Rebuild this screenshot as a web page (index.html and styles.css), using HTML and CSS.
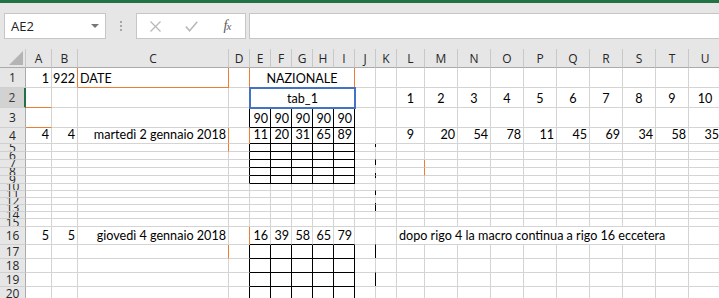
FILE: index.html
```html
<!DOCTYPE html>
<html lang="it">
<head>
<meta charset="utf-8">
<title>Excel - foglio</title>
<link rel="stylesheet" href="styles.css">
</head>
<body>
<div class="app">
  <div class="ribbon-edge"></div>
  <div class="fbar">
    <div class="namebox">
      <span>AE2</span>
      <svg class="dd" width="8" height="4" viewBox="0 0 8 4"><polygon points="0,0 8,0 4,4" fill="#777"/></svg>
    </div>
    <div class="grip"><i></i><i></i><i></i></div>
    <div class="fbtns">
      <svg width="11" height="11" viewBox="0 0 11 11"><path d="M0.5 0.5 L10.5 10.5 M10.5 0.5 L0.5 10.5" stroke="#b8b8b8" stroke-width="1.3" fill="none"/></svg>
      <svg width="13" height="11" viewBox="0 0 13 11"><path d="M0.8 5.6 L4.6 9.8 L12.3 0.8" stroke="#b8b8b8" stroke-width="1.5" fill="none"/></svg>
      <span class="fx">f<span class="fxx">x</span></span>
    </div>
    <div class="finput"></div>
  </div>
  <div class="sheet" id="sheet"></div>
</div>
<script src="script.js"></script>
</body>
</html>
```
FILE: styles.css
```css
html, body {
  margin: 0;
  padding: 0;
  overflow: hidden;
  background: #fff;
}
body {
  width: 719px;
  height: 298px;
  font-family: "Lato", "Liberation Sans", sans-serif;
}
.ribbon-edge {
  height: 3px;
  background: #217346;
}
.fbar {
  height: 46px;
  box-sizing: border-box;
  padding-top: 10px;
  background: #e6e6e6;
  display: flex;
  align-items: flex-start;
}
.namebox {
  box-sizing: border-box;
  width: 102px;
  height: 26px;
  margin-left: 4px;
  background: #fff;
  border: 1px solid #c6c6c6;
  display: flex;
  align-items: center;
  justify-content: space-between;
  padding: 0 6px 0 6px;
  font: 13px "Open Sans", sans-serif;
  color: #222;
}
.grip {
  margin-left: 14px;
  margin-top: 8px;
  display: flex;
  flex-direction: column;
  gap: 2px;
}
.grip i {
  display: block;
  width: 2px;
  height: 2px;
  background: #a6a6a6;
}
.fbtns {
  box-sizing: border-box;
  width: 110px;
  height: 26px;
  margin-left: 14px;
  background: #fff;
  border: 1px solid #c6c6c6;
  display: grid;
  grid-template-columns: repeat(3, 1fr);
  align-items: center;
  justify-items: center;
}
.fx {
  font: italic 14px "Liberation Serif", serif;
  color: #5a5a5a;
  letter-spacing: -1px;
}
.fxx {
  font-size: 11px;
}
.finput {
  flex: 1;
  height: 26px;
  box-sizing: border-box;
  margin-left: 3px;
  margin-right: -6px;
  background: #fff;
  border: 1px solid #c6c6c6;
}
.sheet {
  display: grid;
  grid-template-columns: 26px 26px 26px 151px repeat(8, 21px) 28px repeat(9, 33px);
  grid-template-rows: 19px 20px 20px 20px 16px repeat(5, 8px) repeat(5, 7px) 8px 18px repeat(4, 14px);
  width: 722px;
}
.corner {
  box-sizing: border-box;
  background: #e6e6e6;
  border-right: 1px solid #c8c8c8;
  border-bottom: 1px solid #ababab;
  display: flex;
  align-items: flex-end;
  justify-content: flex-end;
  padding: 0 2px 2px 0;
}
.ch {
  box-sizing: border-box;
  background: #e6e6e6;
  border-right: 1px solid #c8c8c8;
  border-bottom: 1px solid #ababab;
  display: flex;
  align-items: center;
  justify-content: center;
  font: 12px "Open Sans", sans-serif;
  color: #262626;
}
.rh {
  box-sizing: border-box;
  background: #e6e6e6;
  border-right: 1px solid #ababab;
  border-bottom: 1px solid #d0d0d0;
  display: flex;
  align-items: center;
  justify-content: center;
  font: 12px/14px "Open Sans", sans-serif;
  color: #262626;
  overflow: hidden;
}
.rh.on {
  background: #d2d2d2;
  border-right: 2px solid #217346;
  color: #3a3a3a;
}
.c {
  box-sizing: border-box;
  min-width: 0;
  border-right: 1px solid #d4d4d4;
  border-bottom: 1px solid #d4d4d4;
  display: flex;
  align-items: flex-end;
  padding: 0 2px 1px 2px;
  font-size: 12.6px;
  line-height: 15px;
  white-space: nowrap;
  color: #000;
}
.r { justify-content: flex-end; }
.m { justify-content: center; }
.span5 { grid-column: span 5; }
.span9 { grid-column: span 9; }
.bro { border-right-color: #ed7d31; }
.bbo { border-bottom-color: #ed7d31; }
.brk { border-right-color: #000; }
.bbk { border-bottom-color: #000; }
.sel {
  position: relative;
  z-index: 1;
  border: 1px solid #4472c4;
  box-shadow: 0 0 0 1px #4472c4;
}
.dash {
  border-right-color: transparent;
  background-image: linear-gradient(to bottom,
    #d4d4d4 143px, #000 143px, #000 147px, #d4d4d4 147px,
    #d4d4d4 159px, #000 159px, #000 165px, #d4d4d4 165px,
    #d4d4d4 173px, #000 173px, #000 178px, #d4d4d4 178px,
    #d4d4d4 190px, #000 190px, #000 195px, #d4d4d4 195px,
    #d4d4d4 203px, #000 203px, #000 211px, #d4d4d4 211px,
    #d4d4d4 244px, #000 244px, #000 258px, #d4d4d4 258px,
    #d4d4d4 272px, #000 272px, #000 286px, #d4d4d4 286px);
  background-size: 1px 300px;
  background-position: 375px 0;
  background-repeat: no-repeat;
  background-attachment: fixed;
}
```
FILE: script.js
```js
(function () {
  var sheet = document.getElementById('sheet');
  var COLS = 'ABCDEFGHIJKLMNOPQRSTU'.split('');
  var ROWS = 20;
  var V = {};
  var B = {};
  var SPAN = { E1: 5, E2: 5, L16: 9 };

  function put(ref, text, cls) { V[ref] = { text: text, cls: cls || '' }; }
  function add(ref, c) { B[ref] = (B[ref] ? B[ref] + ' ' : '') + c; }

  put('A1', '1', 'r'); put('B1', '922', 'r'); put('C1', 'DATE');
  put('E1', 'NAZIONALE', 'm');
  put('E2', 'tab_1', 'm sel');
  'LMNOPQRSTU'.split('').forEach(function (c, i) { put(c + '2', String(i + 1), 'm'); });
  'EFGHI'.split('').forEach(function (c) { put(c + '3', '90', 'r'); });

  put('A4', '4', 'r'); put('B4', '4', 'r'); put('C4', 'martedì 2 gennaio 2018', 'r');
  [11, 20, 31, 65, 89].forEach(function (v, i) { put('EFGHI'[i] + '4', String(v), 'r'); });
  put('L4', '9', 'm');
  [20, 54, 78, 11, 45, 69, 34, 58, 35].forEach(function (v, i) { put('MNOPQRSTU'[i] + '4', String(v), 'r'); });

  put('A16', '5', 'r'); put('B16', '5', 'r'); put('C16', 'giovedì 4 gennaio 2018', 'r');
  [16, 39, 58, 65, 79].forEach(function (v, i) { put('EFGHI'[i] + '16', String(v), 'r'); });
  put('L16', 'dopo rigo 4 la macro continua a rigo 16 eccetera');

  add('B1', 'bro'); add('C1', 'bro bbo'); add('D1', 'bro'); add('E1', 'bro');
  add('A2', 'bbo'); add('A3', 'bbo');
  add('E2', 'bbk');
  add('D3', 'brk');
  add('C4', 'bro'); add('C5', 'bro'); add('D4', 'bro');
  add('D16', 'bro'); add('C17', 'bro');
  add('L7', 'bro'); add('L8', 'bro');
  var r;
  for (r = 5; r <= 9; r++) add('D' + r, 'brk');
  for (r = 17; r <= 20; r++) add('D' + r, 'brk');
  'EFGHI'.split('').forEach(function (c) {
    add(c + '3', 'brk bbk');
    add(c + '4', 'brk bbk');
    for (var k = 5; k <= 9; k++) add(c + k, 'brk bbk');
    add(c + '16', 'bbk');
    for (var j = 17; j <= 20; j++) add(c + j, 'brk bbk');
  });
  for (r = 5; r <= 20; r++) add('J' + r, 'dash');

  function el(cls, text) {
    var d = document.createElement('div');
    d.className = cls;
    if (text) d.textContent = text;
    return d;
  }

  var corner = el('corner');
  corner.innerHTML = '<svg width="14" height="14" viewBox="0 0 14 14"><polygon points="14,0 14,14 0,14" fill="#b4b4b4"/></svg>';
  sheet.appendChild(corner);
  COLS.forEach(function (c) { sheet.appendChild(el('ch', c)); });

  for (r = 1; r <= ROWS; r++) {
    sheet.appendChild(el('rh' + (r === 2 ? ' on' : ''), String(r)));
    var skip = 0;
    COLS.forEach(function (c) {
      if (skip > 0) { skip--; return; }
      var ref = c + r;
      var v = V[ref];
      var cls = 'c';
      if (v && v.cls) cls += ' ' + v.cls;
      if (B[ref]) cls += ' ' + B[ref];
      if (SPAN[ref]) { cls += ' span' + SPAN[ref]; skip = SPAN[ref] - 1; }
      sheet.appendChild(el(cls, v ? v.text : ''));
    });
  }
})();
```
